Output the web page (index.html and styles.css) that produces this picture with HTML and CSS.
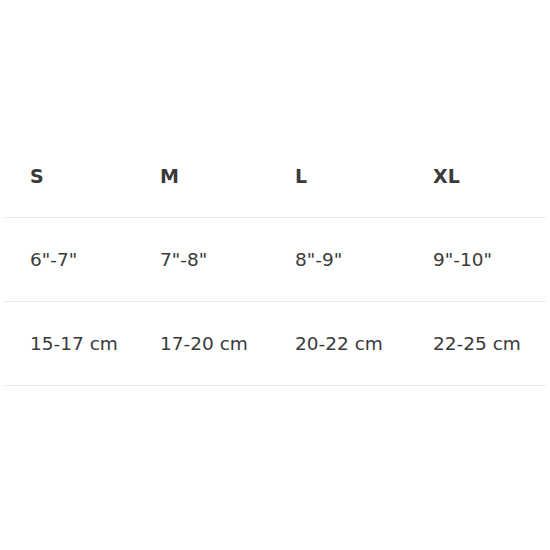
FILE: index.html
```html
<!DOCTYPE html>
<html>
<head>
<meta charset="utf-8">
<link rel="stylesheet" href="styles.css">
</head>
<body>
<div class="page">
  <div class="table">
    <div class="row head">
      <div class="cell">S</div>
      <div class="cell">M</div>
      <div class="cell">L</div>
      <div class="cell">XL</div>
    </div>
    <div class="row">
      <div class="cell">6"-7"</div>
      <div class="cell">7"-8"</div>
      <div class="cell">8"-9"</div>
      <div class="cell">9"-10"</div>
    </div>
    <div class="row">
      <div class="cell">15-17 cm</div>
      <div class="cell">17-20 cm</div>
      <div class="cell">20-22 cm</div>
      <div class="cell">22-25 cm</div>
    </div>
  </div>
</div>
</body>
</html>
```
FILE: styles.css
```css
html, body {
  margin: 0;
  padding: 0;
  background: #ffffff;
}
.page {
  width: 550px;
  height: 550px;
  padding: 134px 4px 0 4px;
  box-sizing: border-box;
  font-family: "DejaVu Sans", sans-serif;
  color: #3a3a3a;
}
.table {
  display: flex;
  flex-direction: column;
}
.row {
  display: grid;
  grid-template-columns: 130px 135px 138px 139px;
  height: 84px;
  align-items: center;
  border-bottom: 1px solid #ebebeb;
  box-sizing: border-box;
}
.cell {
  padding-left: 26px;
  font-size: 18.5px;
  line-height: 24px;
}
.head .cell {
  font-weight: 700;
  font-size: 19px;
}
```
